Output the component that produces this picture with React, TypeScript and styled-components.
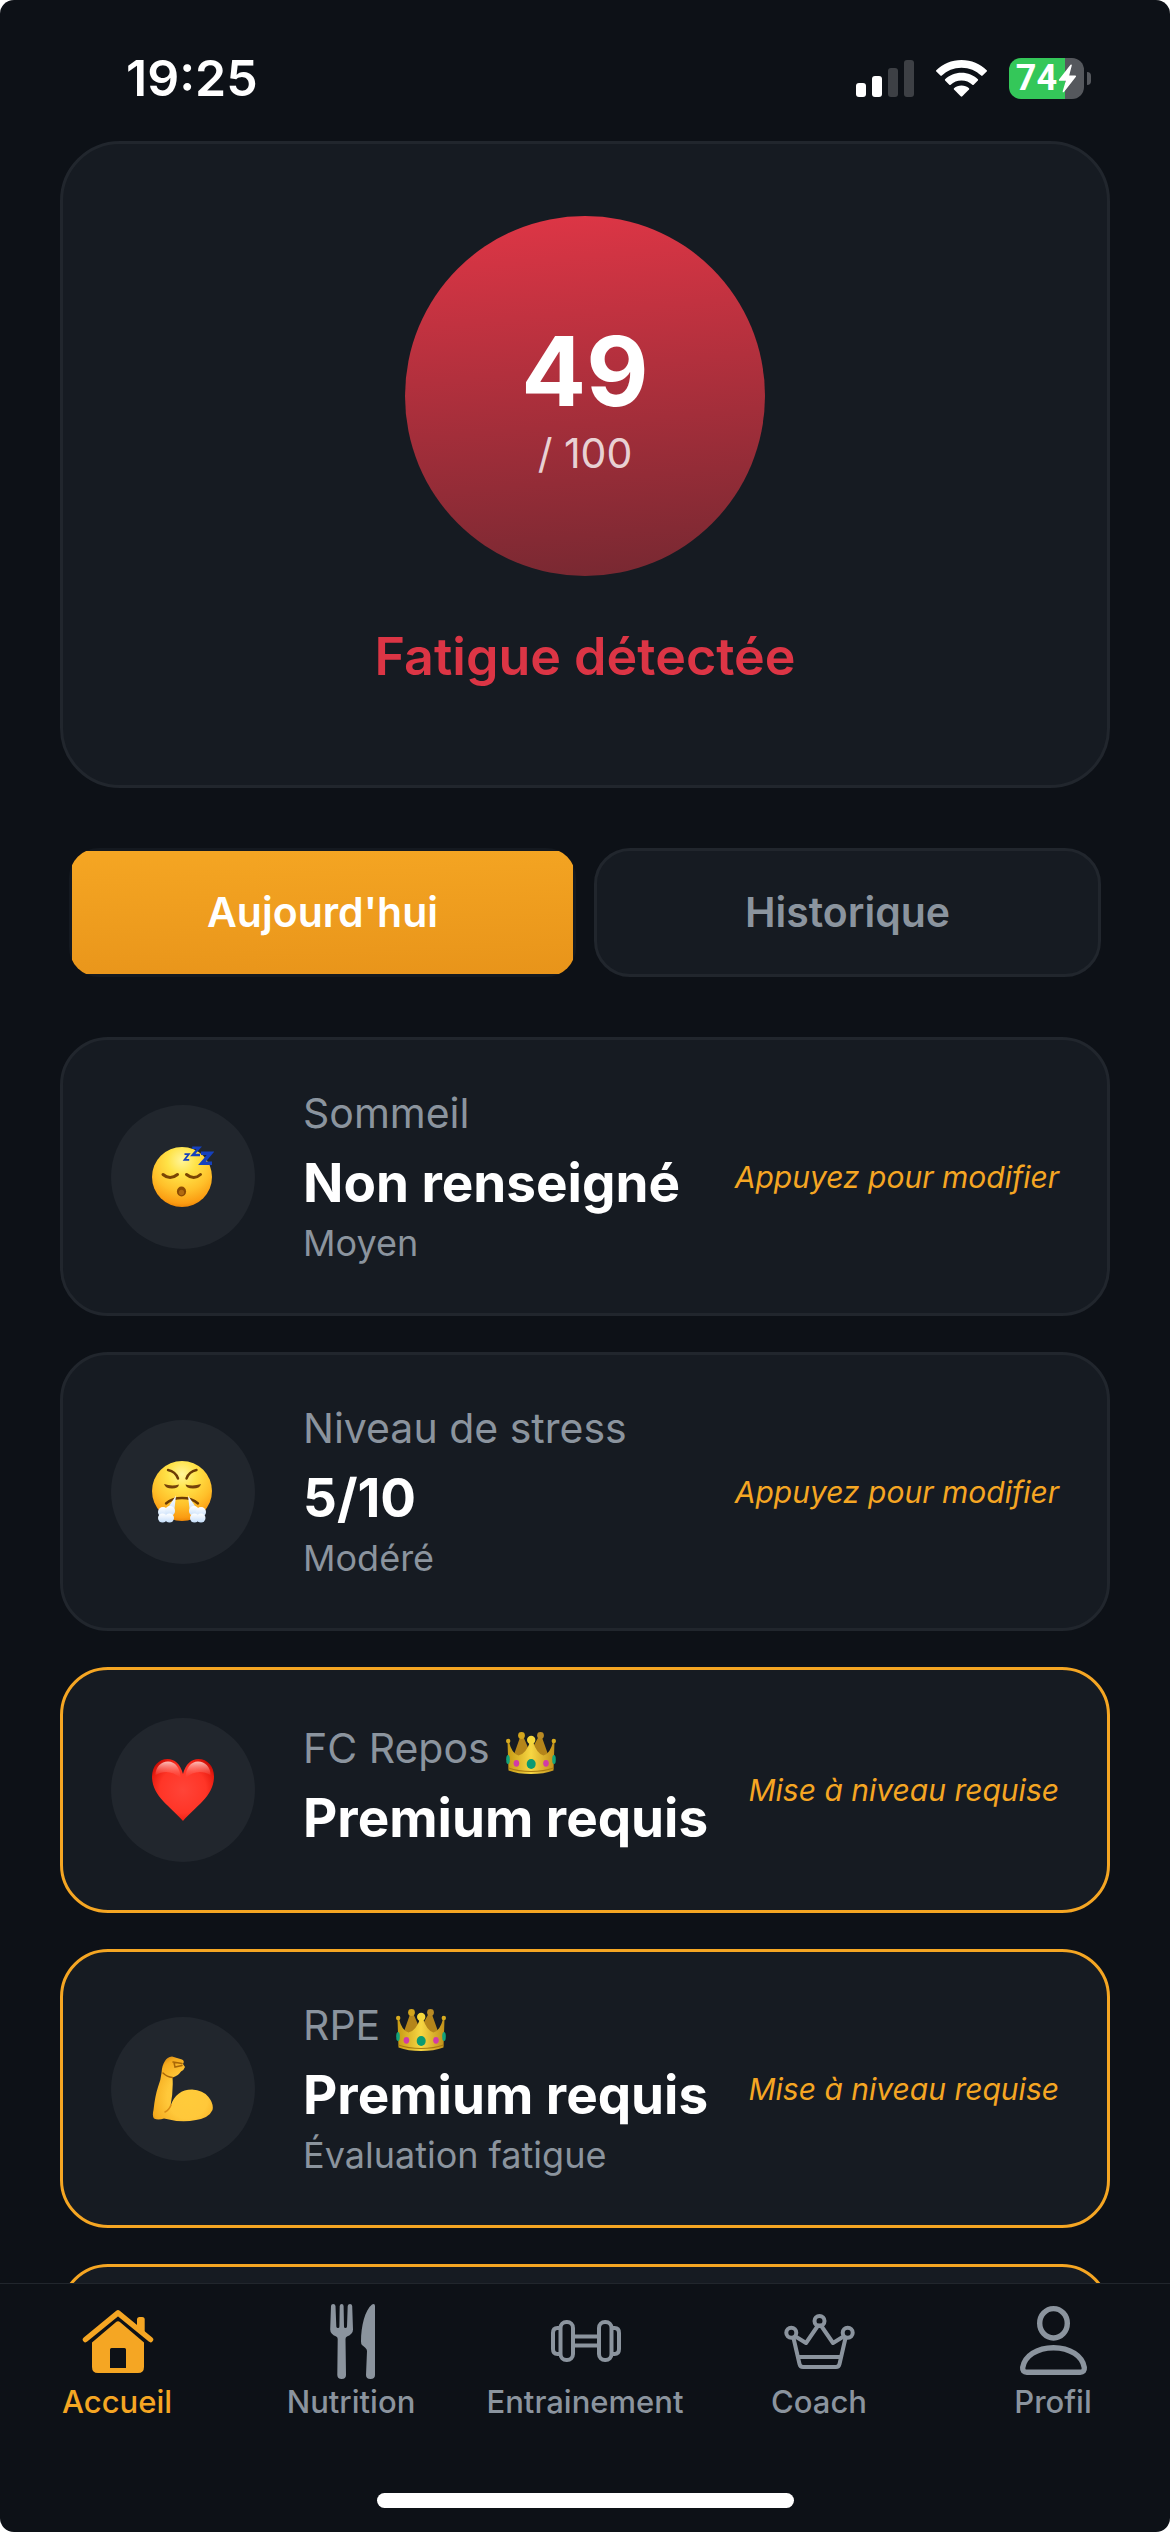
import React from "react";
import styled, { createGlobalStyle, css } from "styled-components";

const color = {
  page: "#0d1117",
  card: "#161b22",
  line: "#21262d",
  muted: "#8b949e",
  accent: "#f5a623",
  danger: "#dc3545",
  white: "#ffffff",
};

const GlobalStyle = createGlobalStyle`
  * { box-sizing: border-box; }
  body {
    margin: 0;
    background: #ffffff;
    font-family: Inter, "Liberation Sans", sans-serif;
    -webkit-font-smoothing: antialiased;
  }
  button { font-family: inherit; cursor: pointer; }
`;

const Screen = styled.div`
  display: flex;
  flex-direction: column;
  height: 100vh;
  overflow: hidden;
  border-radius: 14px;
  background: ${color.page};
  color: ${color.white};
`;

const StatusBar = styled.header`
  flex: none;
  display: flex;
  align-items: center;
  justify-content: space-between;
  height: 141px;
  padding: 15px 79px 0 126px;
`;

const Clock = styled.time`
  font-size: 50px;
  line-height: 60px;
  font-weight: 600;
`;

const StatusIcons = styled.div`
  display: flex;
  align-items: center;
  gap: 22px;
`;

const BatteryWrap = styled.div`
  display: flex;
  align-items: center;
  gap: 3px;
`;

const BatteryBody = styled.div`
  display: flex;
  align-items: center;
  justify-content: center;
  gap: 1px;
  width: 75px;
  height: 41px;
  border-radius: 12px;
  background: linear-gradient(to right, #34c759 75%, #55585d 75%);
  font: 700 36px/41px Roboto, "Liberation Sans", sans-serif;
`;

const BatteryNub = styled.span`
  width: 4px;
  height: 13px;
  border-radius: 0 6px 6px 0;
  background: #55585d;
`;

const Content = styled.main`
  flex: 1;
  min-height: 0;
  overflow: hidden;
  padding: 0 60px;
`;

const ScoreCard = styled.section`
  display: flex;
  flex-direction: column;
  align-items: center;
  padding: 72px 48px 96px;
  border: 3px solid ${color.line};
  border-radius: 60px;
  background: ${color.card};
`;

const ScoreCircle = styled.div`
  display: flex;
  flex-direction: column;
  align-items: center;
  justify-content: center;
  width: 360px;
  height: 360px;
  border-radius: 50%;
  background: linear-gradient(175deg, #e03646, #752831);
`;

const ScoreValue = styled.strong`
  font-size: 96px;
  line-height: 114px;
  font-weight: 700;
`;

const ScoreMax = styled.span`
  font-size: 41px;
  line-height: 51px;
  color: rgba(255, 255, 255, 0.8);
`;

const ScoreTitle = styled.h1`
  margin: 48px 0 0;
  font-size: 52px;
  line-height: 65px;
  font-weight: 600;
  color: ${color.danger};
`;

const Tabs = styled.div`
  display: flex;
  gap: 18px;
  padding: 60px 9px;
`;

const Tab = styled.button<{ $active?: boolean }>`
  flex: 1;
  padding: 36px;
  border: 3px solid ${color.line};
  border-radius: 36px;
  background: ${color.card};
  color: ${color.muted};
  font-size: 41px;
  line-height: 51px;
  font-weight: 600;
  ${(p) =>
    p.$active &&
    css`
      padding: 39px;
      border: 0;
      border-radius: 30px;
      background: linear-gradient(178deg, #f5a623, #e8941a) 3px 3px / calc(100% - 6px) calc(100% - 6px) no-repeat
        #141920;
      color: ${color.white};
    `}
`;

const MetricList = styled.ul`
  display: flex;
  flex-direction: column;
  gap: 36px;
  margin: 0;
  padding: 0;
  list-style: none;
`;

const MetricCard = styled.button<{ $premium?: boolean }>`
  display: flex;
  align-items: center;
  width: 100%;
  min-height: 246px;
  padding: 48px;
  border: 3px solid ${(p) => (p.$premium ? color.accent : color.line)};
  border-radius: 48px;
  background: ${color.card};
  color: ${color.white};
  text-align: left;
`;

const IconDisc = styled.span`
  flex: none;
  display: flex;
  align-items: center;
  justify-content: center;
  width: 144px;
  height: 144px;
  margin-right: 48px;
  border-radius: 50%;
  background: ${color.line};
`;

const MetricText = styled.span`
  flex: 1;
  display: flex;
  flex-direction: column;
  white-space: nowrap;
`;

const MetricLabel = styled.span`
  display: flex;
  align-items: flex-end;
  gap: 16px;
  font-size: 41px;
  line-height: 51px;
  color: ${color.muted};
`;

const MetricValue = styled.span`
  margin: 12px 0 6px;
  font-size: 53px;
  line-height: 65px;
  font-weight: 700;
`;

const MetricNote = styled.span`
  font-size: 36px;
  line-height: 43px;
  color: ${color.muted};
`;

const MetricHint = styled.em`
  flex: none;
  font-size: 30px;
  line-height: 36px;
  color: ${color.accent};
`;

const BottomBar = styled.footer`
  flex: none;
  display: flex;
  flex-direction: column;
  align-items: center;
  gap: 73px;
  padding: 20px 0 24px;
  border-top: 1px solid ${color.line};
`;

const NavRow = styled.nav`
  display: grid;
  grid-template-columns: repeat(5, 1fr);
  width: 100%;
`;

const NavLink = styled.a<{ $active?: boolean }>`
  display: flex;
  flex-direction: column;
  align-items: center;
  gap: 4px;
  font-size: 31px;
  line-height: 36px;
  font-weight: 500;
  text-decoration: none;
  color: ${(p) => (p.$active ? color.accent : color.muted)};
`;

const HomeIndicator = styled.div`
  width: 417px;
  height: 15px;
  border-radius: 8px;
  background: ${color.white};
`;

/* ---------- status icons ---------- */

const Signal = () => (
  <svg width="58" height="37" viewBox="0 0 58 37" aria-hidden="true">
    <rect x="0" y="23" width="10" height="14" rx="3" fill="#fff" />
    <rect x="16" y="16" width="10" height="21" rx="3" fill="#fff" />
    <rect x="32" y="8" width="10" height="29" rx="3" fill="#3d4045" />
    <rect x="48" y="0" width="10" height="37" rx="3" fill="#3d4045" />
  </svg>
);

const Wifi = () => (
  <svg width="51" height="37" viewBox="0 0 51 37" aria-hidden="true" fill="#fff">
    <path d="M25.5 0C35.400 0 44.300 3.900 50.700 10.200Q51.300 10.900 50.700 11.600L46.600 15.600Q45.900 16.200 45.200 15.600C40.100 10.700 33.200 7.700 25.500 7.700S10.900 10.700 5.800 15.600Q5.100 16.200 4.400 15.600L.3 11.600Q-.3 10.900.3 10.200C6.700 3.900 15.600 0 25.500 0Z" />
    <path d="M25.500 12.800C31.900 12.800 37.600 15.300 41.900 19.300Q42.500 20 41.900 20.600L37.700 24.700Q37 25.300 36.300 24.700C33.500 22.100 29.700 20.500 25.500 20.500S17.500 22.100 14.700 24.700Q14 25.300 13.300 24.700L9.100 20.600Q8.500 20 9.100 19.300C13.400 15.300 19.100 12.800 25.500 12.800Z" />
    <path d="M25.500 25.500C28.400 25.500 31 26.500 33 28.200Q33.600 28.900 33 29.600L26.300 36.300Q25.500 37 24.700 36.300L18 29.600Q17.400 28.900 18 28.200C20 26.500 22.600 25.500 25.500 25.500Z" />
  </svg>
);

const Bolt = () => (
  <svg width="19" height="29" viewBox="0 0 19 29" aria-hidden="true">
    <path d="M12.500.8 1 15.600Q.5 16.700 1.700 16.800H7.800L4.700 27.200Q4.600 29 6 28L17.900 12.700Q18.400 11.600 17.200 11.500H11.200L13.800 1.600Q13.900-.2 12.500.8Z" fill="#fff" />
  </svg>
);

/* ---------- emoji artwork ---------- */

const FaceFill = ({ id }: { id: string }) => (
  <defs>
    <radialGradient id={id} cx="0.5" cy="0.22" r="0.8">
      <stop offset="0" stopColor="#fff59a" />
      <stop offset="0.3" stopColor="#ffe348" />
      <stop offset="0.65" stopColor="#ffc02a" />
      <stop offset="0.9" stopColor="#fb9c12" />
      <stop offset="1" stopColor="#e87f05" />
    </radialGradient>
  </defs>
);

const SleepingFace = () => (
  <svg width="62" height="62" viewBox="0 0 62 62" aria-hidden="true">
    <FaceFill id="sleepFace" />
    <circle cx="30" cy="31" r="30" fill="url(#sleepFace)" />
    <g fill="none" stroke="#7a4504" strokeWidth="3" strokeLinecap="round">
      <path d="M11 28.500Q18 34.500 25.500 28.500" />
      <path d="M34.500 28.500Q42 34.500 48.500 28.500" />
    </g>
    <ellipse cx="29.500" cy="45.500" rx="4.600" ry="5" fill="#8a4a04" />
    <ellipse cx="29.500" cy="46.500" rx="2.600" ry="2.800" fill="#b06a10" />
    <g fill="none" stroke="#1540bd" strokeLinejoin="miter">
      <polyline points="32.500,8.200 36.800,8.200 32.500,13.800 37.200,13.800" strokeWidth="1.800" />
      <polyline points="40.200,1.700 47.200,1.700 40.800,9 48,9" strokeWidth="2.500" />
      <polyline points="49,7.300 58.500,7.300 50,17.300 60,17.300" strokeWidth="3.600" />
    </g>
  </svg>
);

const SteamFace = () => (
  <svg width="62" height="64" viewBox="0 0 62 64" aria-hidden="true">
    <FaceFill id="steamFace" />
    <linearGradient id="steam" x1="0" y1="0" x2="0" y2="1">
      <stop offset="0" stopColor="#ffffff" />
      <stop offset="1" stopColor="#c6defa" />
    </linearGradient>
    <circle cx="30" cy="31" r="30" fill="url(#steamFace)" />
    <g fill="none" stroke="#6b3b04" strokeWidth="2.400" strokeLinecap="round">
      <path d="M16 10Q23.500 11.500 26 18.500" />
      <path d="M44.500 10Q37 11.500 34.500 18.500" />
      <path d="M14 43.500Q20 38 30 38T46 43.500" />
    </g>
    <g fill="#75420a">
      <path d="M12 24Q19.500 26.500 27 24.500Q26.500 28.500 20 28.500T12 24Z" />
      <path d="M49 24Q41.500 26.500 33.500 24.500Q34 28.500 41 28.500T49 24Z" />
    </g>
    <g fill="url(#steam)">
      <path d="M24 35.500 15 49 22 53Z" />
      <path d="M36 35.500 38 53 45 49Z" />
      <circle cx="11" cy="52" r="5" />
      <circle cx="18" cy="51" r="5" />
      <circle cx="10.500" cy="58" r="4.500" />
      <circle cx="17.500" cy="58" r="4.500" />
      <circle cx="42" cy="51" r="5" />
      <circle cx="49" cy="52" r="5" />
      <circle cx="42.500" cy="58" r="4.500" />
      <circle cx="49" cy="58" r="4.500" />
    </g>
  </svg>
);

const Heart = () => (
  <svg width="62" height="62" viewBox="0 0 62 62" aria-hidden="true">
    <defs>
      <radialGradient id="heart" cx="0.5" cy="0.5" r="0.62">
        <stop offset="0" stopColor="#ff4438" />
        <stop offset="0.6" stopColor="#ff3527" />
        <stop offset="0.85" stopColor="#ea1c10" />
        <stop offset="1" stopColor="#bd0803" />
      </radialGradient>
      <linearGradient id="heartShine" x1="0" y1="0" x2="0" y2="1">
        <stop offset="0" stopColor="#ffd0cb" stopOpacity="0.9" />
        <stop offset="1" stopColor="#ff6a60" stopOpacity="0" />
      </linearGradient>
    </defs>
    <path
      d="M31 15C28.500 5 22.500 0 15.500 0 6.500 0 0 7.500 0 17.500 0 37 18 47 31 62 44 47 62 37 62 17.500 62 7.500 55.500 0 46.500 0 39.500 0 33.500 5 31 15Z"
      fill="url(#heart)"
    />
    <path d="M16 2.500C9 2.500 3.500 8 3.500 16 12 11 21 12 28.500 19 28.500 9 23 2.500 16 2.500Z" fill="url(#heartShine)" />
    <path d="M46 2.500C53 2.500 58.500 8 58.500 16 50 11 41 12 33.500 19 33.500 9 39 2.500 46 2.500Z" fill="url(#heartShine)" />
  </svg>
);

const Biceps = () => (
  <svg width="64" height="66" viewBox="0 0 64 66" aria-hidden="true">
    <defs>
      <radialGradient id="arm" cx="0.58" cy="0.62" r="0.68">
        <stop offset="0" stopColor="#ffcb3a" />
        <stop offset="0.5" stopColor="#ffc83a" />
        <stop offset="0.9" stopColor="#f5ab1e" />
        <stop offset="1" stopColor="#e09416" />
      </radialGradient>
    </defs>
    <path
      d="M14 5Q16 1 21 .5L31 3.500Q34 5 32 8L34 11Q33 14 30 15.500Q27 20 21.500 21.500Q22.500 34 19.500 50Q25 33.500 41 33.500Q52 34 57.500 41Q63 48 61.500 54Q58 62 45 64Q30 67 13 62.500Q7 64.500 3 62.500Q1 60 2.500 54Q4 40 7 31Q10 23 10.500 17Q11 9 14 5Z"
      fill="url(#arm)"
    />
    <path d="M20 49Q18 54 14 56" fill="none" stroke="#d98b14" strokeWidth="1.600" strokeLinecap="round" />
    <path d="M22 6 31 7.500M23 6.500 24 11 31 9.500M12 17Q16 21 21.500 21.500" fill="none" stroke="#a86708" strokeWidth="1.500" strokeLinecap="round" />
  </svg>
);

const CrownEmoji = () => (
  <svg width="50" height="42" viewBox="0 0 50 42" aria-hidden="true">
    <defs>
      <linearGradient id="gold" x1="0" y1="0" x2="1" y2="0">
        <stop offset="0" stopColor="#c79a14" />
        <stop offset="0.5" stopColor="#f7d643" />
        <stop offset="1" stopColor="#c1901a" />
      </linearGradient>
    </defs>
    <path d="M6 28 14.500 4H17L24 20 33 4H35.500L44 28Z" fill="#b5851a" />
    <circle cx="15.500" cy="3.500" r="3.400" fill="#d2a41c" />
    <circle cx="34.500" cy="3.500" r="3.400" fill="#b98a24" />
    <path
      d="M1.500 10 3 10Q6 22 12.500 23.500 20 22 24 10H27Q31 22 37.500 23.500 44 22 47 10H48.500L47.500 38.500Q38 42 25 42T2.500 38.500Z"
      fill="url(#gold)"
    />
    <path d="M2.500 36Q12 39.500 25 39.500T47.500 36" fill="none" stroke="#a87a10" strokeWidth="1.200" />
    <circle cx="25.200" cy="8" r="4.200" fill="#f6d83c" />
    <circle cx="2.200" cy="9" r="2.200" fill="#d8ab20" />
    <circle cx="47.800" cy="9" r="2.200" fill="#d8ab20" />
    <ellipse cx="25.200" cy="32" rx="4.500" ry="5" fill="#0b9a72" />
    <ellipse cx="10.400" cy="31.300" rx="2.800" ry="3.400" fill="#d23ba8" />
    <ellipse cx="40" cy="31.300" rx="2.800" ry="3.400" fill="#d23ba8" />
    <ellipse cx="2" cy="27.500" rx="1.800" ry="4.600" fill="#12a37a" />
    <ellipse cx="48" cy="27.500" rx="1.800" ry="4.600" fill="#12a37a" />
  </svg>
);

/* ---------- navigation icons ---------- */

const NavSvg = ({ children }: { children: React.ReactNode }) => (
  <svg width="76" height="76" viewBox="0 0 76 76" aria-hidden="true" fill="none">
    {children}
  </svg>
);

const HomeIcon = () => (
  <NavSvg>
    <path d="M6.500 35.500 39 8.800 71.500 35.500" stroke="currentColor" strokeWidth="5.500" strokeLinecap="round" strokeLinejoin="round" />
    <path d="M58 25V15.500Q58 13 60.500 13H63.200Q65.700 13 65.700 15.500V31.500Z" fill="currentColor" />
    <path
      fillRule="evenodd"
      fill="currentColor"
      d="M36.800 18.200Q39 16.500 41.200 18.200L65 38.500V63Q65 69 59 69H19Q13 69 13 63V38.500ZM32.500 44Q31 44 31 45.500V64H47V45.500Q47 44 45.500 44Z"
    />
  </NavSvg>
);

const NutritionIcon = () => (
  <NavSvg>
    <path
      fill="currentColor"
      d="M18 2Q18.200 0 20.200 0T22.500 2L23.300 22.500Q23.500 24 25 24T26.400 22.500L26.700 2Q26.900 0 28.700 0T30.600 2L31 22.500Q31 24 32.400 24T34 22.500L34.700 2Q35 0 37 0T39.200 2L40 25.500Q40 30 34 32.500 32.500 33 32.500 35L33 71Q33 75 28.700 75T24.300 71L24.700 35Q24.700 33 23.200 32.500 17.200 30 17.200 25.500Z"
    />
    <path fill="currentColor" d="M59 0.500Q62 -1 62 2V71Q62 75 57.500 75T53 71L54 47Q54 45 52 43.500L49 41Q48 40 48 37.500C48 22 52 6 59 .5Z" />
  </NavSvg>
);

const TrainingIcon = () => (
  <NavSvg>
    <g stroke="currentColor" strokeWidth="4">
      <rect x="13.500" y="18" width="12.500" height="38" rx="6" />
      <rect x="52" y="18" width="12.500" height="38" rx="6" />
      <path d="M26 32.500H52M26 41.500H52" />
      <path d="M13.500 24H10.500Q6 24 6 29V45Q6 50 10.500 50H13.500M64.500 24H67.500Q72 24 72 29V45Q72 50 67.500 50H64.500" />
    </g>
  </NavSvg>
);

const CoachIcon = () => (
  <NavSvg>
    <g stroke="currentColor" strokeWidth="4" strokeLinejoin="round">
      <circle cx="10.300" cy="28.700" r="5" />
      <circle cx="38.500" cy="17" r="5" />
      <circle cx="66.700" cy="28.700" r="5" />
      <path d="M14.500 32.500 25 39 37 21.500H40L52 39 62.500 32.500" />
      <path d="M12.500 34 18.500 60Q19.200 63 22 63H55Q57.800 63 58.500 60L64.500 34M17 53H60" />
    </g>
  </NavSvg>
);

const ProfileIcon = () => (
  <NavSvg>
    <g stroke="currentColor" strokeWidth="5.400">
      <ellipse cx="38.500" cy="19.300" rx="13.800" ry="14.700" />
      <path d="M7.700 63.500C9.500 52 22 43.700 38.500 43.700S67.500 52 69.300 63.500Q69.700 68.300 65.200 68.300H11.800Q7.300 68.300 7.700 63.500Z" />
    </g>
  </NavSvg>
);

/* ---------- data ---------- */

type Metric = {
  label: string;
  value: string;
  note?: string;
  premium?: boolean;
  Icon: React.FC;
};

const metrics: Metric[] = [
  { label: "Sommeil", value: "Non renseigné", note: "Moyen", Icon: SleepingFace },
  { label: "Niveau de stress", value: "5/10", note: "Modéré", Icon: SteamFace },
  { label: "FC Repos", value: "Premium requis", premium: true, Icon: Heart },
  { label: "RPE", value: "Premium requis", note: "Évaluation fatigue", premium: true, Icon: Biceps },
];

const navItems = [
  { label: "Accueil", href: "#accueil", Icon: HomeIcon },
  { label: "Nutrition", href: "#nutrition", Icon: NutritionIcon },
  { label: "Entrainement", href: "#entrainement", Icon: TrainingIcon },
  { label: "Coach", href: "#coach", Icon: CoachIcon },
  { label: "Profil", href: "#profil", Icon: ProfileIcon },
];

export default function App() {
  return (
    <Screen>
      <GlobalStyle />
      <StatusBar>
        <Clock>19:25</Clock>
        <StatusIcons>
          <Signal />
          <Wifi />
          <BatteryWrap>
            <BatteryBody>
              74
              <Bolt />
            </BatteryBody>
            <BatteryNub />
          </BatteryWrap>
        </StatusIcons>
      </StatusBar>

      <Content>
        <ScoreCard>
          <ScoreCircle>
            <ScoreValue>49</ScoreValue>
            <ScoreMax>/ 100</ScoreMax>
          </ScoreCircle>
          <ScoreTitle>Fatigue détectée</ScoreTitle>
        </ScoreCard>

        <Tabs>
          <Tab type="button" $active>
            Aujourd'hui
          </Tab>
          <Tab type="button">Historique</Tab>
        </Tabs>

        <MetricList>
          {metrics.map(({ label, value, note, premium, Icon }) => (
            <li key={label}>
              <MetricCard type="button" $premium={premium}>
                <IconDisc>
                  <Icon />
                </IconDisc>
                <MetricText>
                  <MetricLabel>
                    {label}
                    {premium && <CrownEmoji />}
                  </MetricLabel>
                  <MetricValue>{value}</MetricValue>
                  {note && <MetricNote>{note}</MetricNote>}
                </MetricText>
                <MetricHint>{premium ? "Mise à niveau requise" : "Appuyez pour modifier"}</MetricHint>
              </MetricCard>
            </li>
          ))}
          <li>
            <MetricCard type="button" $premium />
          </li>
        </MetricList>
      </Content>

      <BottomBar>
        <NavRow>
          {navItems.map(({ label, href, Icon }, i) => (
            <NavLink key={label} href={href} $active={i === 0}>
              <Icon />
              {label}
            </NavLink>
          ))}
        </NavRow>
        <HomeIndicator />
      </BottomBar>
    </Screen>
  );
}
